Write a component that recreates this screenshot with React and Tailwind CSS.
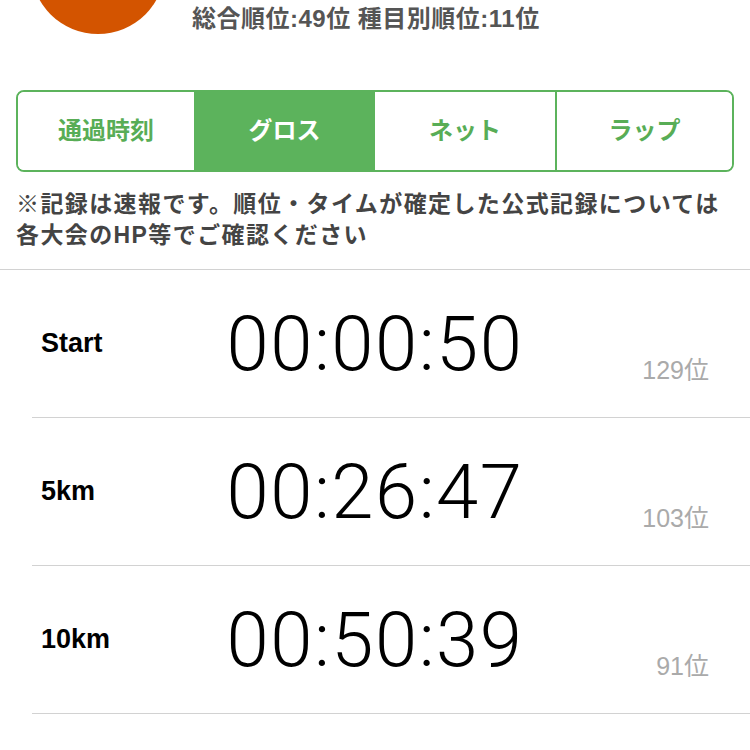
const splits = [
  { label: "Start", time: "00:00:50", rank: "129位" },
  { label: "5km", time: "00:26:47", rank: "103位" },
  { label: "10km", time: "00:50:39", rank: "91位" },
];

const tabs = [
  { name: "通過時刻", w: "w-[176px]" },
  { name: "グロス", w: "w-[181px]" },
  { name: "ネット", w: "w-[180px]" },
  { name: "ラップ", w: "flex-1 border-l-2 border-[#5cb35c]" },
];

const jp = { fontFamily: '"Liberation Sans", "Noto Sans CJK JP", sans-serif' };

const App = () => {
  return (
    <div className="w-[750px] h-[750px] overflow-hidden bg-white" style={jp}>
      {/* header: avatar is scrolled mostly off screen */}
      <div className="flex h-[90px]">
        <div className="w-[134px] h-[134px] shrink-0 rounded-full bg-[#d35400] ml-[31px] -mt-[100px]" />
        <p className="ml-[27px] mt-[4px] text-[24px] leading-[30px] font-bold text-[#555] tracking-[0.5px]">
          総合順位:49位 種目別順位:11位
        </p>
      </div>

      <div className="mx-4 h-[82px] flex rounded-lg border-2 border-[#5cb35c] overflow-hidden">
        {tabs.map((t, i) => (
          <div
            key={t.name}
            className={
              t.w +
              " flex items-center justify-center text-[24px] font-bold " +
              (i === 1 ? "bg-[#5cb35c] text-white" : "bg-white text-[#58ad56]")
            }
          >
            {t.name}
          </div>
        ))}
      </div>

      <p className="px-4 mt-[17px] mb-[18px] text-[23px] leading-[31px] font-bold text-[#444] tracking-[1.4px]">
        ※記録は速報です。順位・タイムが確定した公式記録については
        <br />
        各大会のHP等でご確認ください
      </p>

      <div className="border-t border-[#d2d2d2]">
        {splits.map((s) => (
          <div key={s.label} className="ml-8 h-[148px] flex items-center border-b border-[#d2d2d2]">
            <div className="w-[120px] pl-[9px] text-[27px] font-bold text-black">{s.label}</div>
            <div
              className="flex-1 text-center text-[76px] font-light text-black leading-none tracking-[1.5px]"
              style={{ fontFamily: 'Roboto, "Liberation Sans", sans-serif' }}
            >
              {s.time}
            </div>
            <div className="w-[152px] pr-[41px] text-right text-[25px] text-[#aaa] mt-[54px]">
              {s.rank}
            </div>
          </div>
        ))}
      </div>
    </div>
  );
};

export default App;
